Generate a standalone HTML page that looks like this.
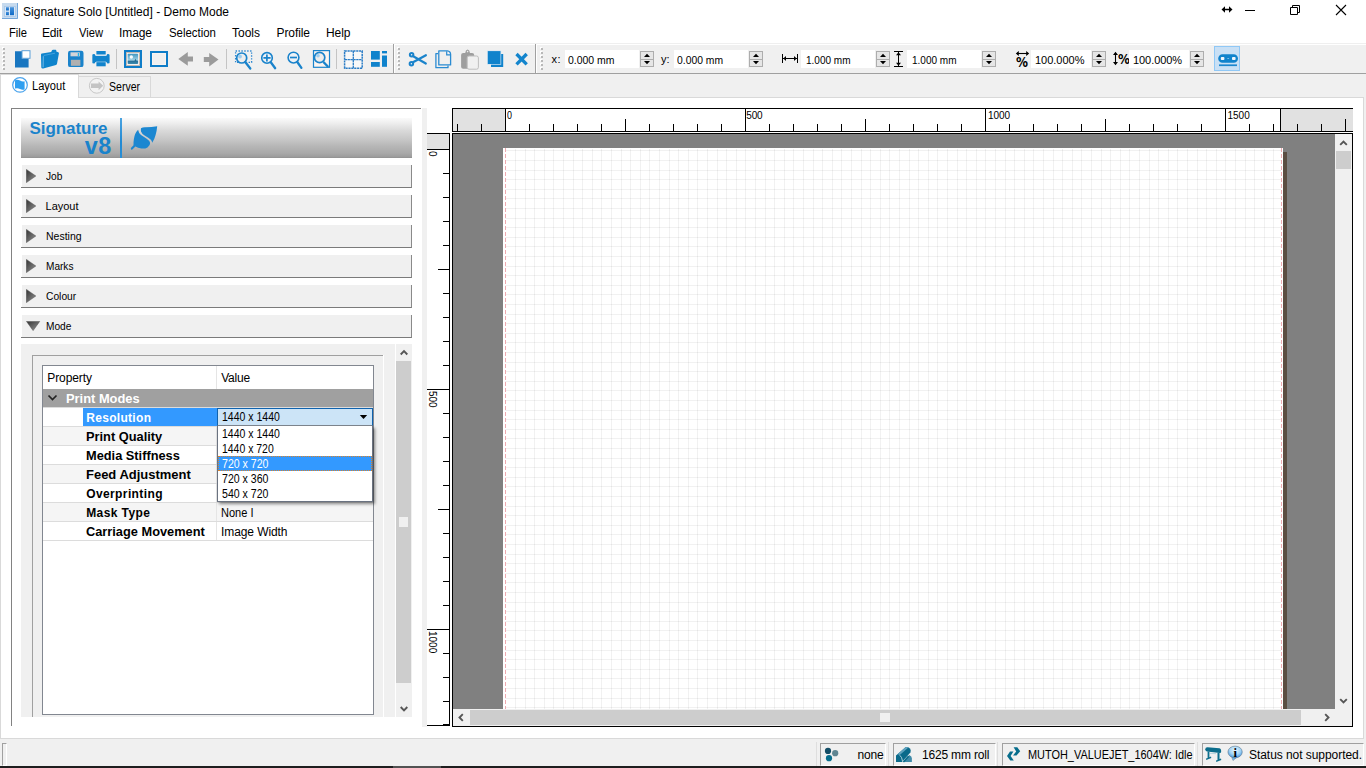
<!DOCTYPE html>
<html><head><meta charset="utf-8"><title>Signature Solo [Untitled] - Demo Mode</title>
<style>
html,body{margin:0;padding:0;width:1366px;height:768px;overflow:hidden;background:#fff;font-family:"Liberation Sans",sans-serif;}
#app{position:relative;width:1366px;height:768px;overflow:hidden}
#app>div,#app>span,#app>svg{position:absolute;display:block}
.t{white-space:pre}
</style></head><body><div id="app">
<div style="left:0px;top:0px;width:1366px;height:44px;background:#fff"></div>
<svg class="a" style="left:2px;top:3px" width="16" height="16" viewBox="0 0 16 16"><defs><linearGradient id="ag" x1="0" y1="0" x2="0" y2="1"><stop offset="0" stop-color="#4a94dc"/><stop offset="1" stop-color="#0f6ac6"/></linearGradient></defs><rect width="16" height="16" fill="#c6daee"/><path d="M15.500 0V15.500H0" fill="none" stroke="#74a6da" stroke-width="1"/><rect x="2.500" y="3.500" width="11" height="10" fill="#d9e7f5" stroke="#a9c8e8" stroke-width=".8"/><rect x="4" y="4.200" width="2.900" height="3.300" fill="url(#ag)"/><rect x="4" y="8.800" width="2.900" height="3.400" fill="url(#ag)"/><rect x="8" y="4.200" width="4" height="8" fill="url(#ag)"/></svg>
<span class="t" style="top:5.84px;font-size:12px;line-height:12px;color:#000;left:23.00px;letter-spacing:0.017px;">Signature Solo [Untitled] - Demo Mode</span>
<svg class="a" style="left:1215px;top:0" width="151" height="22" viewBox="0 0 151 22" fill="none" stroke="#000" stroke-width="1"><path d="M8 9.5H16" stroke-width="1.5"/><path d="M6.500 9.500L10 6.300V12.700zM17.500 9.500L14 6.300V12.700z" fill="#000" stroke="none"/><path d="M30 10.5h10"/><path d="M75.5 7.5h7v7h-7zM77.5 7.5v-2h7v7h-2"/><path d="M121 5l10 10M131 5l-10 10" stroke-width="1.1"/></svg>
<span class="t" style="top:26.84px;font-size:12px;line-height:12px;color:#000;left:8.50px;transform-origin:0 0;transform:scaleX(0.9326);">File</span>
<span class="t" style="top:26.84px;font-size:12px;line-height:12px;color:#000;left:42.00px;letter-spacing:-0.233px;">Edit</span>
<span class="t" style="top:26.84px;font-size:12px;line-height:12px;color:#000;left:78.50px;transform-origin:0 0;transform:scaleX(0.9302);">View</span>
<span class="t" style="top:26.84px;font-size:12px;line-height:12px;color:#000;left:119.00px;letter-spacing:-0.100px;">Image</span>
<span class="t" style="top:26.84px;font-size:12px;line-height:12px;color:#000;left:168.50px;transform-origin:0 0;transform:scaleX(0.9514);">Selection</span>
<span class="t" style="top:26.84px;font-size:12px;line-height:12px;color:#000;left:232.00px;">Tools</span>
<span class="t" style="top:26.84px;font-size:12px;line-height:12px;color:#000;left:276.50px;letter-spacing:-0.083px;">Profile</span>
<span class="t" style="top:26.84px;font-size:12px;line-height:12px;color:#000;left:326.00px;letter-spacing:-0.067px;">Help</span>
<div style="left:0px;top:43px;width:1366px;height:1px;background:#efefef"></div>
<div style="left:0px;top:44px;width:1366px;height:29px;background:#f0f0f0"></div>
<div style="left:0px;top:44px;width:1366px;height:1px;background:#fff"></div>
<div style="left:0px;top:73px;width:1366px;height:1px;background:#a0a0a0"></div>
<div style="left:116px;top:49px;width:1px;height:20px;background:#c4c4c4"></div>
<div style="left:226px;top:49px;width:1px;height:20px;background:#c4c4c4"></div>
<div style="left:336px;top:49px;width:1px;height:20px;background:#c4c4c4"></div>
<div style="left:393px;top:44px;width:1px;height:29px;background:#a0a0a0"></div>
<div style="left:394px;top:44px;width:1px;height:29px;background:#fff"></div>
<div style="left:535px;top:44px;width:1px;height:29px;background:#a0a0a0"></div>
<div style="left:536px;top:44px;width:1px;height:29px;background:#fff"></div>
<div style="left:2px;top:47px;width:2px;height:2px;background:#fff"></div>
<div style="left:3px;top:48px;width:2px;height:2px;background:#b8b8b8"></div>
<div style="left:2px;top:51px;width:2px;height:2px;background:#fff"></div>
<div style="left:3px;top:52px;width:2px;height:2px;background:#b8b8b8"></div>
<div style="left:2px;top:55px;width:2px;height:2px;background:#fff"></div>
<div style="left:3px;top:56px;width:2px;height:2px;background:#b8b8b8"></div>
<div style="left:2px;top:59px;width:2px;height:2px;background:#fff"></div>
<div style="left:3px;top:60px;width:2px;height:2px;background:#b8b8b8"></div>
<div style="left:2px;top:63px;width:2px;height:2px;background:#fff"></div>
<div style="left:3px;top:64px;width:2px;height:2px;background:#b8b8b8"></div>
<div style="left:2px;top:67px;width:2px;height:2px;background:#fff"></div>
<div style="left:3px;top:68px;width:2px;height:2px;background:#b8b8b8"></div>
<div style="left:397px;top:47px;width:2px;height:2px;background:#fff"></div>
<div style="left:398px;top:48px;width:2px;height:2px;background:#b8b8b8"></div>
<div style="left:397px;top:51px;width:2px;height:2px;background:#fff"></div>
<div style="left:398px;top:52px;width:2px;height:2px;background:#b8b8b8"></div>
<div style="left:397px;top:55px;width:2px;height:2px;background:#fff"></div>
<div style="left:398px;top:56px;width:2px;height:2px;background:#b8b8b8"></div>
<div style="left:397px;top:59px;width:2px;height:2px;background:#fff"></div>
<div style="left:398px;top:60px;width:2px;height:2px;background:#b8b8b8"></div>
<div style="left:397px;top:63px;width:2px;height:2px;background:#fff"></div>
<div style="left:398px;top:64px;width:2px;height:2px;background:#b8b8b8"></div>
<div style="left:397px;top:67px;width:2px;height:2px;background:#fff"></div>
<div style="left:398px;top:68px;width:2px;height:2px;background:#b8b8b8"></div>
<div style="left:540px;top:47px;width:2px;height:2px;background:#fff"></div>
<div style="left:541px;top:48px;width:2px;height:2px;background:#b8b8b8"></div>
<div style="left:540px;top:51px;width:2px;height:2px;background:#fff"></div>
<div style="left:541px;top:52px;width:2px;height:2px;background:#b8b8b8"></div>
<div style="left:540px;top:55px;width:2px;height:2px;background:#fff"></div>
<div style="left:541px;top:56px;width:2px;height:2px;background:#b8b8b8"></div>
<div style="left:540px;top:59px;width:2px;height:2px;background:#fff"></div>
<div style="left:541px;top:60px;width:2px;height:2px;background:#b8b8b8"></div>
<div style="left:540px;top:63px;width:2px;height:2px;background:#fff"></div>
<div style="left:541px;top:64px;width:2px;height:2px;background:#b8b8b8"></div>
<div style="left:540px;top:67px;width:2px;height:2px;background:#fff"></div>
<div style="left:541px;top:68px;width:2px;height:2px;background:#b8b8b8"></div>
<div style="left:1214px;top:46px;width:26px;height:25px;background:#c9e0f5;border:1px solid #90c8f6;box-sizing:border-box"></div>
<svg class="a" style="left:0;top:44px" width="1366" height="30" viewBox="0 44 1366 30">
<!-- new -->
<path d="M15 51.200H22V58.500H28.600V67.500H15z" fill="#1976c0"/>
<rect x="22" y="50.700" width="8" height="7.600" fill="#fff" stroke="#5a9fd8" stroke-width="1"/>
<!-- open -->
<path d="M41 54.500Q41 53.600 42 53.500L51.200 52L52 50.300Q52.300 49.800 53 49.800L55.600 49.800Q56.300 49.800 56.300 50.600V51.600L58.200 52.200Q59.200 52.500 58.900 53.600L57 63.800Q56.800 64.600 56 64.900L43.200 68.500Q41.600 68.800 41.300 67.600Z" fill="#0f84cc"/>
<path d="M43.300 56.200L43.100 67.300" stroke="#7cc0ec" stroke-width=".9" fill="none"/>
<path d="M43.600 55.500L55 53.200" stroke="#55aee6" stroke-width=".7" fill="none"/>
<!-- save -->
<rect x="68" y="50.800" width="15.500" height="16.300" rx="2.200" fill="#1a83cb"/>
<rect x="70.500" y="52.300" width="9.400" height="4" fill="#d4d4d8"/>
<rect x="77.800" y="53" width="1.300" height="3" fill="#21b4ea"/>
<rect x="70.900" y="59.800" width="9.500" height="6" fill="#b0b0b0"/>
<!-- print -->
<rect x="96.400" y="51" width="9.300" height="3.600" fill="#1083cc"/>
<rect x="96.400" y="62" width="9.300" height="4.300" fill="#1083cc"/>
<path d="M94 55.700H108Q109.300 55.700 109.300 53.800Q109.600 58.800 109.300 63.700Q109.200 61.900 108 61.900H94Q92.900 61.900 92.700 63.700Q92.400 58.800 92.700 53.800Q92.900 55.700 94 55.700Z" fill="#1083cc"/>
<rect x="92.600" y="54" width="2.600" height="9.600" rx="1.300" fill="#1083cc"/>
<rect x="106.700" y="54" width="2.600" height="9.600" rx="1.300" fill="#1083cc"/>
<rect x="96" y="54.800" width="10.100" height=".800" fill="#dbeaf6"/><rect x="96" y="61.700" width="10.100" height=".500" fill="#dbeaf6"/>
<!-- image frame -->
<defs><linearGradient id="sky" x1="0" y1="0" x2="0" y2="1"><stop offset="0" stop-color="#3f96c0"/><stop offset=".65" stop-color="#a8d6e8"/><stop offset=".66" stop-color="#256b91"/><stop offset="1" stop-color="#3f8db2"/></linearGradient></defs>
<rect x="125" y="51" width="16" height="16" fill="#e6dfd8" stroke="#0f7dc8" stroke-width="2"/>
<rect x="126.500" y="52.500" width="13" height="13" fill="#f4f4f4" stroke="#c0b4aa" stroke-width=".9"/>
<rect x="127.700" y="53.700" width="10.400" height="10.400" rx=".8" fill="url(#sky)"/>
<circle cx="131.300" cy="57" r="1.700" fill="#fff" opacity=".95"/>
<path d="M134.500 61L135.500 58.600L136.500 61z" fill="#256b91"/>
<!-- empty frame -->
<rect x="151" y="52" width="16" height="14" fill="#f0f0f0" stroke="#0f7dc8" stroke-width="2"/>
<rect x="152.400" y="53.400" width="13.200" height="11.200" fill="none" stroke="#fbf6f2" stroke-width=".8"/>
<!-- arrows -->
<path d="M178.300 58.900L187.800 52.100V56.400H193V61.400H187.800V65.800z" fill="#9b9b9b"/>
<path d="M218.500 59.500L209.200 52.900V57H203.800V62H209.200V66.400z" fill="#9b9b9b"/>
<!-- zoom rect -->
<rect x="235.600" y="51" width="16" height="11.400" fill="none" stroke="#2d86cf" stroke-width="1.300" stroke-dasharray="1.400 1.500"/>
<circle cx="241.700" cy="58" r="5" fill="#eeeeee" stroke="#1a83cb" stroke-width="1.700"/>
<circle cx="240" cy="56.500" r="1.900" fill="#9ccdf0"/>
<path d="M245.400 62.200L250.300 68.500" stroke="#1a83cb" stroke-width="2.300" stroke-linecap="round"/>
<!-- zoom in -->
<circle cx="267" cy="57.900" r="5.300" fill="#eef2f6" stroke="#1a83cb" stroke-width="1.600"/>
<path d="M263.400 57.800H270.600M266.900 54.400V61.400" stroke="#1a83cb" stroke-width="1.700"/>
<path d="M270.800 62.300L275.200 68.200" stroke="#1a83cb" stroke-width="2.300" stroke-linecap="round"/>
<!-- zoom out -->
<circle cx="293.500" cy="57.600" r="5.400" fill="#eef2f6" stroke="#1a83cb" stroke-width="1.600"/>
<path d="M290 57.500H297" stroke="#1a83cb" stroke-width="1.700"/>
<path d="M297.300 62L301.400 67.800" stroke="#1a83cb" stroke-width="2.300" stroke-linecap="round"/>
<!-- zoom fit -->
<rect x="313.500" y="50.600" width="16" height="16.700" fill="#fbf4f0" stroke="#1a83cb" stroke-width="1.200"/>
<circle cx="319.600" cy="57.500" r="5.200" fill="#ececec" stroke="#1a83cb" stroke-width="1.700"/>
<circle cx="318" cy="55.700" r="1.800" fill="#9ccdf0"/>
<path d="M323.400 62L328.300 67" stroke="#1a83cb" stroke-width="2.400" stroke-linecap="butt"/>
<!-- grid -->
<rect x="344.600" y="51" width="17.600" height="17.200" fill="#f8f8f8" stroke="#2a7cc6" stroke-width="1.500" stroke-dasharray="2.200 .700"/>
<path d="M353.300 51V68.200M344.600 59.600H362.200" stroke="#2a7cc6" stroke-width="1.300" stroke-dasharray="2.400 .500"/>
<!-- layout -->
<rect x="371" y="51" width="8.800" height="8.600" fill="#1083cc"/>
<rect x="371" y="62" width="8.800" height="4.800" fill="#1083cc"/>
<rect x="382" y="51" width="5" height="2.400" fill="#1083cc"/>
<rect x="382" y="55.500" width="5" height="11.300" fill="#1083cc"/>
<!-- scissors -->
<circle cx="411.600" cy="54.800" r="1.750" fill="none" stroke="#1a83cb" stroke-width="2"/>
<circle cx="411.400" cy="63.800" r="1.750" fill="none" stroke="#1a83cb" stroke-width="2"/>
<path d="M413.200 56.300L425.800 63.500M413 62.300L425.900 55.200" stroke="#1a83cb" stroke-width="2.200" stroke-linecap="round"/>
<!-- copy -->
<path d="M438 53.700H435.900V67.700H448V65.600" fill="#efefef" stroke="#2a8bd2" stroke-width="1.300" stroke-linejoin="round"/>
<path d="M438.800 50.900H447.300Q450.600 51.300 450.600 54.500V64.900H438.800z" fill="#f1f0ef" stroke="#2a8bd2" stroke-width="1.300" stroke-linejoin="round"/>
<path d="M446.700 51.200V54.800H450.300" fill="none" stroke="#2a8bd2" stroke-width="1.200"/>
<!-- paste -->
<path d="M461.100 55Q461.100 52.900 463.200 52.900H465.200Q465.600 49.800 467.600 49.600Q469.600 49.800 470 52.900H472Q474.200 52.900 474.200 55V66.700Q474.200 68.700 472 68.700H463.200Q461.100 68.700 461.100 66.700Z" fill="#9e9e9e"/>
<circle cx="467.600" cy="51.600" r=".8" fill="#eee"/>
<rect x="467.200" y="56" width="11.200" height="13.200" rx="1.800" fill="#f0f0f0" stroke="#bdbdbd" stroke-width="1"/>
<!-- stack -->
<path d="M491 54H503.200V67H491z" fill="#1083cc"/>
<rect x="487.200" y="50.500" width="14" height="14.200" fill="#cfe4f4"/>
<rect x="487.800" y="51.100" width="12.700" height="12.900" fill="#1083cc"/>
<!-- delete -->
<path d="M516.500 54L526.700 64.400M526.700 54L516.500 64.400" stroke="#1385cd" stroke-width="3.300"/>
<!-- width -->
<path d="M782.500 54V63M797.500 54V63M783 58.500H797" stroke="#000" stroke-width="1" fill="none"/>
<path d="M783.300 58.500L786 56V61zM796.700 58.500L794 56V61z" fill="#000"/>
<!-- height -->
<path d="M894 51.500H903M894 66.500H903M898.500 52V66" stroke="#000" stroke-width="1" fill="none"/>
<path d="M898.500 52.200L896 55.200H901zM898.500 65.800L896 62.800H901z" fill="#000"/>
<!-- scale x -->
<path d="M1017 53.500H1028" stroke="#000" stroke-width="1.100"/>
<path d="M1015.800 53.500L1018.800 51V56zM1029.200 53.500L1026.200 51V56z" fill="#000"/>
<!-- scale y -->
<path d="M1115.500 53V64" stroke="#000" stroke-width="1.100"/>
<path d="M1115.500 51.800L1113 55H1118zM1115.500 65.200L1113 62H1118z" fill="#000"/>
<!-- link -->
<rect x="1219.200" y="55.200" width="17.800" height="6.600" rx="3.300" fill="#1083cc" stroke="#1083cc" stroke-width="2"/>
<rect x="1220.800" y="57" width="3.600" height="3" rx=".9" fill="#eef5fb"/>
<rect x="1232" y="57" width="3.600" height="3" rx=".9" fill="#eef5fb"/>
<rect x="1227.300" y="58.200" width="1.800" height=".8" fill="#8fc4ea"/>
<rect x="1219" y="64.400" width="18" height="1.700" fill="#1a86cf"/>
</svg>
<span class="t" style="left:1016.2px;top:55px;font-family:'DejaVu Sans',sans-serif;font-size:13.6px;line-height:14px;font-weight:bold;transform-origin:0 0;transform:scaleX(.88)">%</span>
<span class="t" style="left:1117.6px;top:52px;font-family:'DejaVu Sans',sans-serif;font-size:13.6px;line-height:14px;font-weight:bold;transform-origin:0 0;transform:scaleX(.88)">%</span>
<div style="left:565px;top:50px;width:74px;height:18px;background:#fff"></div>
<div style="left:640px;top:51px;width:14px;height:16px;background:#e6e6e6;border:1px solid #adadad;box-sizing:border-box"></div>
<div style="left:640px;top:58.5px;width:14px;height:1px;background:#adadad"></div>
<svg class="a" style="left:640px;top:51px" width="14" height="16" viewBox="0 0 14 16"><path d="M4 6l3-3.2L10 6zM4 10l3 3.2L10 10z" fill="#000"/></svg>
<div style="left:674px;top:50px;width:74px;height:18px;background:#fff"></div>
<div style="left:749px;top:51px;width:14px;height:16px;background:#e6e6e6;border:1px solid #adadad;box-sizing:border-box"></div>
<div style="left:749px;top:58.5px;width:14px;height:1px;background:#adadad"></div>
<svg class="a" style="left:749px;top:51px" width="14" height="16" viewBox="0 0 14 16"><path d="M4 6l3-3.2L10 6zM4 10l3 3.2L10 10z" fill="#000"/></svg>
<div style="left:801px;top:50px;width:74px;height:18px;background:#fff"></div>
<div style="left:876px;top:51px;width:14px;height:16px;background:#e6e6e6;border:1px solid #adadad;box-sizing:border-box"></div>
<div style="left:876px;top:58.5px;width:14px;height:1px;background:#adadad"></div>
<svg class="a" style="left:876px;top:51px" width="14" height="16" viewBox="0 0 14 16"><path d="M4 6l3-3.2L10 6zM4 10l3 3.2L10 10z" fill="#000"/></svg>
<div style="left:907px;top:50px;width:74px;height:18px;background:#fff"></div>
<div style="left:982px;top:51px;width:14px;height:16px;background:#e6e6e6;border:1px solid #adadad;box-sizing:border-box"></div>
<div style="left:982px;top:58.5px;width:14px;height:1px;background:#adadad"></div>
<svg class="a" style="left:982px;top:51px" width="14" height="16" viewBox="0 0 14 16"><path d="M4 6l3-3.2L10 6zM4 10l3 3.2L10 10z" fill="#000"/></svg>
<div style="left:1031px;top:50px;width:60px;height:18px;background:#fff"></div>
<div style="left:1092px;top:51px;width:14px;height:16px;background:#e6e6e6;border:1px solid #adadad;box-sizing:border-box"></div>
<div style="left:1092px;top:58.5px;width:14px;height:1px;background:#adadad"></div>
<svg class="a" style="left:1092px;top:51px" width="14" height="16" viewBox="0 0 14 16"><path d="M4 6l3-3.2L10 6zM4 10l3 3.2L10 10z" fill="#000"/></svg>
<div style="left:1129px;top:50px;width:60px;height:18px;background:#fff"></div>
<div style="left:1190px;top:51px;width:14px;height:16px;background:#e6e6e6;border:1px solid #adadad;box-sizing:border-box"></div>
<div style="left:1190px;top:58.5px;width:14px;height:1px;background:#adadad"></div>
<svg class="a" style="left:1190px;top:51px" width="14" height="16" viewBox="0 0 14 16"><path d="M4 6l3-3.2L10 6zM4 10l3 3.2L10 10z" fill="#000"/></svg>
<span class="t" style="top:53.69px;font-size:11px;line-height:11px;color:#000;left:551.50px;letter-spacing:0.500px;">x:</span>
<span class="t" style="top:53.69px;font-size:11px;line-height:11px;color:#000;left:661.00px;letter-spacing:0.100px;">y:</span>
<span class="t" style="top:54.69px;font-size:11px;line-height:11px;color:#000;left:567.50px;transform-origin:0 0;transform:scaleX(0.9509);">0.000 mm</span>
<span class="t" style="top:54.69px;font-size:11px;line-height:11px;color:#000;left:677.00px;transform-origin:0 0;transform:scaleX(0.9407);">0.000 mm</span>
<span class="t" style="top:54.69px;font-size:11px;line-height:11px;color:#000;left:805.50px;transform-origin:0 0;transform:scaleX(0.9100);">1.000 mm</span>
<span class="t" style="top:54.69px;font-size:11px;line-height:11px;color:#000;left:911.50px;transform-origin:0 0;transform:scaleX(0.9100);">1.000 mm</span>
<span class="t" style="top:54.69px;font-size:11px;line-height:11px;color:#000;left:1035.00px;letter-spacing:-0.014px;">100.000%</span>
<span class="t" style="top:54.69px;font-size:11px;line-height:11px;color:#000;left:1133.00px;letter-spacing:-0.071px;">100.000%</span>
<div style="left:0px;top:74px;width:1366px;height:23px;background:#f0f0f0"></div>
<div style="left:0px;top:97px;width:1364px;height:642px;background:#fff;border:1px solid #d9d9d9;box-sizing:border-box"></div>
<div style="left:1364px;top:97px;width:2px;height:642px;background:#f0f0f0"></div>
<div style="left:0px;top:74px;width:79px;height:24px;background:#fff;border:1px solid #d9d9d9;border-bottom:none;box-sizing:border-box"></div>
<div style="left:78px;top:76px;width:73px;height:21px;background:#f0f0f0;border:1px solid #d9d9d9;border-bottom:none;box-sizing:border-box"></div>
<span class="t" style="top:79.84px;font-size:12px;line-height:12px;color:#000;left:31.50px;transform-origin:0 0;transform:scaleX(0.9222);">Layout</span>
<span class="t" style="top:80.84px;font-size:12px;line-height:12px;color:#000;left:108.70px;transform-origin:0 0;transform:scaleX(0.8782);">Server</span>
<svg class="a" style="left:0;top:74px" width="160" height="24" viewBox="0 74 160 24">
<circle cx="20" cy="84.900" r="7.300" fill="#fff" stroke="#4aa3ec" stroke-width="1.200"/>
<path d="M15 80.300Q17.500 79 20 80.500Q22.500 82 24.600 81.200V89.400Q22.500 90.400 20 89Q17.500 87.600 15 88.600Z" fill="#2f9ff0"/>
<circle cx="96.800" cy="85.800" r="7.400" fill="#f3f3f3" stroke="#c8c8c8" stroke-width="1"/>
<path d="M91 83.500H98.600V81.400L103.200 85.800L98.600 90.200V88H91z" fill="#c4c4c4"/>
</svg>
<div style="left:11px;top:108px;width:410px;height:1px;background:#828282"></div>
<div style="left:11px;top:108px;width:1px;height:618px;background:#828282"></div>
<div style="left:422px;top:108px;width:5px;height:619px;background:#f0f0f0"></div>
<div style="left:21px;top:118px;width:391px;height:40px;background:linear-gradient(180deg,#fafafa 0%,#f1f1f1 10%,#e6e6e6 20%,#d9d9d9 32%,#cdcdcd 46%,#c3c3c3 58%,#b5b5b5 72%,#a9a9a9 88%,#9e9e9e 96%,#909090 100%)"></div>
<span class="t" style="top:119.61px;font-size:17px;line-height:17px;color:#1a83cb;font-weight:bold;left:29.60px;letter-spacing:-0.075px;">Signature</span>
<span class="t" style="top:135.49px;font-size:23.4px;line-height:23.4px;color:#1a83cb;font-weight:bold;left:84.80px;letter-spacing:0.400px;">v8</span>
<div style="left:120px;top:118px;width:2px;height:40px;background:linear-gradient(180deg,#4ba3e0,#2189d3 60%,#2a8fd6)"></div>
<svg class="a" style="left:128px;top:122px" width="32" height="32" viewBox="128 122 32 32">
<path d="M141 128.300Q142.500 127.200 145 127.200Q151 127.300 157.200 126.200Q156.800 131 155.600 135Q154.400 139.600 152.200 142.700Q152 140.600 150.600 139.400Q148 137.500 145 135.800Q141.800 134 141 131.600Q140.700 129.800 141 128.300Z" fill="#1b87d1"/>
<path d="M138.100 129.800Q136.200 131.600 135.200 134Q134.300 136.200 133.900 139Q133.300 142.500 133.500 145.300L130.900 148Q130.400 149.100 131.800 149.900L135.400 146.500Q137.800 147.900 141.400 148.500Q144.800 149 147.500 147.400Q150.300 145.600 150.100 143Q149.700 140.600 146.700 138.700Q143.600 136.900 141 135.100Q138.600 133.200 138.100 129.800Z" fill="#1b87d1"/>
</svg>
<div style="left:21px;top:165px;width:391px;height:23px;background:#f0f0f0;border-right:1px solid #8a8a8a;border-bottom:1px solid #7a7a7a;box-sizing:border-box"></div>
<div style="left:21px;top:165px;width:1px;height:22px;background:#fff"></div>
<span class="t" style="top:170.69px;font-size:11px;line-height:11px;color:#000;left:45.60px;transform-origin:0 0;transform:scaleX(0.9266);">Job</span>
<svg class="a" style="left:26px;top:169px" width="11" height="14" viewBox="0 0 11 14"><defs><linearGradient id="tg0" x1="0" y1="0" x2="1" y2="1"><stop offset="0" stop-color="#333"/><stop offset="1" stop-color="#999"/></linearGradient></defs><path d="M0.400 0.400L9.800 7L0.400 13.600z" fill="url(#tg0)" stroke="#4a4a4a" stroke-width=".5"/></svg>
<div style="left:21px;top:195px;width:391px;height:23px;background:#f0f0f0;border-right:1px solid #8a8a8a;border-bottom:1px solid #7a7a7a;box-sizing:border-box"></div>
<div style="left:21px;top:195px;width:1px;height:22px;background:#fff"></div>
<span class="t" style="top:200.69px;font-size:11px;line-height:11px;color:#000;left:45.60px;letter-spacing:-0.020px;">Layout</span>
<svg class="a" style="left:26px;top:199px" width="11" height="14" viewBox="0 0 11 14"><defs><linearGradient id="tg1" x1="0" y1="0" x2="1" y2="1"><stop offset="0" stop-color="#333"/><stop offset="1" stop-color="#999"/></linearGradient></defs><path d="M0.400 0.400L9.800 7L0.400 13.600z" fill="url(#tg1)" stroke="#4a4a4a" stroke-width=".5"/></svg>
<div style="left:21px;top:225px;width:391px;height:23px;background:#f0f0f0;border-right:1px solid #8a8a8a;border-bottom:1px solid #7a7a7a;box-sizing:border-box"></div>
<div style="left:21px;top:225px;width:1px;height:22px;background:#fff"></div>
<span class="t" style="top:230.69px;font-size:11px;line-height:11px;color:#000;left:45.60px;transform-origin:0 0;transform:scaleX(0.9544);">Nesting</span>
<svg class="a" style="left:26px;top:229px" width="11" height="14" viewBox="0 0 11 14"><defs><linearGradient id="tg2" x1="0" y1="0" x2="1" y2="1"><stop offset="0" stop-color="#333"/><stop offset="1" stop-color="#999"/></linearGradient></defs><path d="M0.400 0.400L9.800 7L0.400 13.600z" fill="url(#tg2)" stroke="#4a4a4a" stroke-width=".5"/></svg>
<div style="left:21px;top:255px;width:391px;height:23px;background:#f0f0f0;border-right:1px solid #8a8a8a;border-bottom:1px solid #7a7a7a;box-sizing:border-box"></div>
<div style="left:21px;top:255px;width:1px;height:22px;background:#fff"></div>
<span class="t" style="top:260.69px;font-size:11px;line-height:11px;color:#000;left:45.60px;transform-origin:0 0;transform:scaleX(0.9164);">Marks</span>
<svg class="a" style="left:26px;top:259px" width="11" height="14" viewBox="0 0 11 14"><defs><linearGradient id="tg3" x1="0" y1="0" x2="1" y2="1"><stop offset="0" stop-color="#333"/><stop offset="1" stop-color="#999"/></linearGradient></defs><path d="M0.400 0.400L9.800 7L0.400 13.600z" fill="url(#tg3)" stroke="#4a4a4a" stroke-width=".5"/></svg>
<div style="left:21px;top:285px;width:391px;height:23px;background:#f0f0f0;border-right:1px solid #8a8a8a;border-bottom:1px solid #7a7a7a;box-sizing:border-box"></div>
<div style="left:21px;top:285px;width:1px;height:22px;background:#fff"></div>
<span class="t" style="top:290.69px;font-size:11px;line-height:11px;color:#000;left:45.60px;transform-origin:0 0;transform:scaleX(0.9321);">Colour</span>
<svg class="a" style="left:26px;top:289px" width="11" height="14" viewBox="0 0 11 14"><defs><linearGradient id="tg4" x1="0" y1="0" x2="1" y2="1"><stop offset="0" stop-color="#333"/><stop offset="1" stop-color="#999"/></linearGradient></defs><path d="M0.400 0.400L9.800 7L0.400 13.600z" fill="url(#tg4)" stroke="#4a4a4a" stroke-width=".5"/></svg>
<div style="left:21px;top:315px;width:391px;height:23px;background:#f0f0f0;border-right:1px solid #8a8a8a;border-bottom:1px solid #7a7a7a;box-sizing:border-box"></div>
<div style="left:21px;top:315px;width:1px;height:22px;background:#fff"></div>
<span class="t" style="top:320.69px;font-size:11px;line-height:11px;color:#000;left:45.60px;transform-origin:0 0;transform:scaleX(0.9236);">Mode</span>
<svg class="a" style="left:26px;top:321px" width="15" height="11" viewBox="0 0 15 11"><defs><linearGradient id="tg5" x1="0" y1="0" x2="1" y2="1"><stop offset="0" stop-color="#333"/><stop offset="1" stop-color="#999"/></linearGradient></defs><path d="M0.500 0.400L13.700 0.400L7.100 9.600z" fill="url(#tg5)" stroke="#4a4a4a" stroke-width=".5"/></svg>
<div style="left:21px;top:344px;width:374px;height:373px;background:#f0f0f0"></div>
<div style="left:32px;top:355px;width:351px;height:1px;background:#a0a0a0"></div>
<div style="left:32px;top:355px;width:1px;height:362px;background:#a0a0a0"></div>
<div style="left:383px;top:355px;width:1px;height:362px;background:#fff"></div>
<div style="left:396px;top:344px;width:16px;height:373px;background:#f0f0f0"></div>
<div style="left:396px;top:361px;width:15px;height:322px;background:#cdcdcd"></div>
<div style="left:399px;top:517px;width:9px;height:10px;background:#f0f0f0"></div>
<svg class="a" style="left:396px;top:344px" width="16" height="373" viewBox="0 0 16 373" fill="none" stroke="#565656" stroke-width="1.9"><path d="M4.700 10.500L8 7.200l3.300 3.300"/><path d="M4.700 363L8 366.300l3.300-3.300"/></svg>
<div style="left:42px;top:365px;width:332px;height:350px;background:#fff;border:1px solid #828790;box-sizing:border-box"></div>
<div style="left:216px;top:366px;width:1px;height:23px;background:#e5e5e5"></div>
<span class="t" style="top:371.84px;font-size:12px;line-height:12px;color:#000;left:47.30px;letter-spacing:-0.100px;">Property</span>
<span class="t" style="top:371.84px;font-size:12px;line-height:12px;color:#000;left:221.20px;letter-spacing:-0.200px;">Value</span>
<div style="left:43px;top:389px;width:330px;height:18px;background:#a0a0a0"></div>
<div style="left:43px;top:407px;width:330px;height:1px;background:#dcdcdc"></div>
<svg class="a" style="left:47px;top:394px" width="11" height="8" viewBox="0 0 11 8"><path d="M1.500 1.500L5.500 5.500L9.500 1.500" fill="none" stroke="#222" stroke-width="1.7"/></svg>
<span class="t" style="top:392.84px;font-size:12px;line-height:12px;color:#fff;font-weight:bold;left:66.30px;transform-origin:0 0;transform:scaleX(1.0728);">Print Modes</span>
<div style="left:43px;top:426px;width:330px;height:1px;background:#dcdcdc"></div>
<div style="left:216px;top:408px;width:1px;height:18px;background:#e5e5e5"></div>
<div style="left:83px;top:408px;width:134px;height:18px;background:#3399ff"></div>
<span class="t" style="top:411.84px;font-size:12px;line-height:12px;color:#fff;font-weight:bold;left:86.20px;letter-spacing:0.311px;">Resolution</span>
<div style="left:43px;top:427px;width:330px;height:18px;background:#f5f5f5"></div>
<div style="left:43px;top:445px;width:330px;height:1px;background:#dcdcdc"></div>
<div style="left:216px;top:427px;width:1px;height:18px;background:#e5e5e5"></div>
<span class="t" style="top:430.84px;font-size:12px;line-height:12px;color:#000;font-weight:bold;left:86.20px;transform-origin:0 0;transform:scaleX(1.0686);">Print Quality</span>
<div style="left:43px;top:464px;width:330px;height:1px;background:#dcdcdc"></div>
<div style="left:216px;top:446px;width:1px;height:18px;background:#e5e5e5"></div>
<span class="t" style="top:449.84px;font-size:12px;line-height:12px;color:#000;font-weight:bold;left:86.20px;transform-origin:0 0;transform:scaleX(1.0659);">Media Stiffness</span>
<div style="left:43px;top:465px;width:330px;height:18px;background:#f5f5f5"></div>
<div style="left:43px;top:483px;width:330px;height:1px;background:#dcdcdc"></div>
<div style="left:216px;top:465px;width:1px;height:18px;background:#e5e5e5"></div>
<span class="t" style="top:468.84px;font-size:12px;line-height:12px;color:#000;font-weight:bold;left:86.20px;transform-origin:0 0;transform:scaleX(1.0815);">Feed Adjustment</span>
<div style="left:43px;top:502px;width:330px;height:1px;background:#dcdcdc"></div>
<div style="left:216px;top:484px;width:1px;height:18px;background:#e5e5e5"></div>
<span class="t" style="top:487.84px;font-size:12px;line-height:12px;color:#000;font-weight:bold;left:86.20px;letter-spacing:0.391px;">Overprinting</span>
<div style="left:43px;top:503px;width:330px;height:18px;background:#f5f5f5"></div>
<div style="left:43px;top:521px;width:330px;height:1px;background:#dcdcdc"></div>
<div style="left:216px;top:503px;width:1px;height:18px;background:#e5e5e5"></div>
<span class="t" style="top:506.84px;font-size:12px;line-height:12px;color:#000;font-weight:bold;left:86.20px;letter-spacing:0.412px;">Mask Type</span>
<div style="left:43px;top:540px;width:330px;height:1px;background:#dcdcdc"></div>
<div style="left:216px;top:522px;width:1px;height:18px;background:#e5e5e5"></div>
<span class="t" style="top:525.84px;font-size:12px;line-height:12px;color:#000;font-weight:bold;left:86.20px;transform-origin:0 0;transform:scaleX(1.0664);">Carriage Movement</span>
<span class="t" style="top:506.84px;font-size:12px;line-height:12px;color:#000;left:221.00px;transform-origin:0 0;transform:scaleX(0.9181);">None I</span>
<span class="t" style="top:525.84px;font-size:12px;line-height:12px;color:#000;left:221.00px;letter-spacing:-0.090px;">Image Width</span>
<div style="left:217px;top:408px;width:156px;height:18px;background:#cce4f7;border:1px solid #1062ad;border-bottom-color:#7f8790;box-sizing:border-box"></div>
<span class="t" style="top:410.84px;font-size:12px;line-height:12px;color:#000;left:221.80px;transform-origin:0 0;transform:scaleX(0.8759);">1440 x 1440</span>
<svg class="a" style="left:359px;top:414px" width="9" height="6" viewBox="0 0 9 6"><path d="M0.800 1h7.400L4.500 5z" fill="#000"/></svg>
<div style="left:217px;top:426px;width:156px;height:76px;background:#fff;border:1px solid #6a7280;border-top:none;box-sizing:border-box;box-shadow:2px 2px 3px rgba(0,0,0,.45)"></div>
<div style="left:218px;top:456px;width:154px;height:15px;background:#3399ff;outline:1px dotted #d9822b;outline-offset:-1px"></div>
<span class="t" style="top:427.84px;font-size:12px;line-height:12px;color:#000;left:221.80px;transform-origin:0 0;transform:scaleX(0.8759);">1440 x 1440</span>
<span class="t" style="top:442.84px;font-size:12px;line-height:12px;color:#000;left:221.80px;transform-origin:0 0;transform:scaleX(0.8704);">1440 x 720</span>
<span class="t" style="top:457.84px;font-size:12px;line-height:12px;color:#fff;left:221.60px;transform-origin:0 0;transform:scaleX(0.8805);">720 x 720</span>
<span class="t" style="top:472.84px;font-size:12px;line-height:12px;color:#000;left:221.60px;transform-origin:0 0;transform:scaleX(0.8805);">720 x 360</span>
<span class="t" style="top:487.84px;font-size:12px;line-height:12px;color:#000;left:221.60px;transform-origin:0 0;transform:scaleX(0.8805);">540 x 720</span>
<div style="left:452px;top:108px;width:901px;height:24px;background:#fff;border:1px solid #000;border-right:none;box-sizing:border-box"></div>
<div style="left:453px;top:109px;width:52px;height:22px;background:#e1e1e1"></div>
<div style="left:1281px;top:109px;width:72px;height:22px;background:#e1e1e1"></div>
<div style="left:457px;top:124px;width:1px;height:7px;background:#000"></div>
<div style="left:481px;top:124px;width:1px;height:7px;background:#000"></div>
<div style="left:505px;top:109px;width:1px;height:22px;background:#000"></div>
<div style="left:529px;top:124px;width:1px;height:7px;background:#000"></div>
<div style="left:553px;top:124px;width:1px;height:7px;background:#000"></div>
<div style="left:577px;top:124px;width:1px;height:7px;background:#000"></div>
<div style="left:601px;top:124px;width:1px;height:7px;background:#000"></div>
<div style="left:625px;top:119px;width:1px;height:12px;background:#000"></div>
<div style="left:649px;top:124px;width:1px;height:7px;background:#000"></div>
<div style="left:673px;top:124px;width:1px;height:7px;background:#000"></div>
<div style="left:697px;top:124px;width:1px;height:7px;background:#000"></div>
<div style="left:721px;top:124px;width:1px;height:7px;background:#000"></div>
<div style="left:745px;top:109px;width:1px;height:22px;background:#000"></div>
<div style="left:769px;top:124px;width:1px;height:7px;background:#000"></div>
<div style="left:793px;top:124px;width:1px;height:7px;background:#000"></div>
<div style="left:817px;top:124px;width:1px;height:7px;background:#000"></div>
<div style="left:841px;top:124px;width:1px;height:7px;background:#000"></div>
<div style="left:865px;top:119px;width:1px;height:12px;background:#000"></div>
<div style="left:889px;top:124px;width:1px;height:7px;background:#000"></div>
<div style="left:913px;top:124px;width:1px;height:7px;background:#000"></div>
<div style="left:937px;top:124px;width:1px;height:7px;background:#000"></div>
<div style="left:961px;top:124px;width:1px;height:7px;background:#000"></div>
<div style="left:985px;top:109px;width:1px;height:22px;background:#000"></div>
<div style="left:1009px;top:124px;width:1px;height:7px;background:#000"></div>
<div style="left:1033px;top:124px;width:1px;height:7px;background:#000"></div>
<div style="left:1057px;top:124px;width:1px;height:7px;background:#000"></div>
<div style="left:1081px;top:124px;width:1px;height:7px;background:#000"></div>
<div style="left:1105px;top:119px;width:1px;height:12px;background:#000"></div>
<div style="left:1129px;top:124px;width:1px;height:7px;background:#000"></div>
<div style="left:1153px;top:124px;width:1px;height:7px;background:#000"></div>
<div style="left:1177px;top:124px;width:1px;height:7px;background:#000"></div>
<div style="left:1201px;top:124px;width:1px;height:7px;background:#000"></div>
<div style="left:1225px;top:109px;width:1px;height:22px;background:#000"></div>
<div style="left:1249px;top:124px;width:1px;height:7px;background:#000"></div>
<div style="left:1273px;top:124px;width:1px;height:7px;background:#000"></div>
<div style="left:1297px;top:124px;width:1px;height:7px;background:#000"></div>
<div style="left:1321px;top:124px;width:1px;height:7px;background:#000"></div>
<div style="left:1345px;top:119px;width:1px;height:12px;background:#000"></div>
<div style="left:1280px;top:109px;width:1px;height:22px;background:#000"></div>
<span class="t" style="top:110.53px;font-size:10px;line-height:10px;color:#000;left:507.00px;transform-origin:0 0;transform:scaleX(0.8929);">0</span>
<span class="t" style="top:110.53px;font-size:10px;line-height:10px;color:#000;left:746.30px;letter-spacing:-0.150px;">500</span>
<span class="t" style="top:110.53px;font-size:10px;line-height:10px;color:#000;left:988.00px;letter-spacing:-0.067px;">1000</span>
<span class="t" style="top:110.53px;font-size:10px;line-height:10px;color:#000;left:1227.50px;">1500</span>
<div style="left:427px;top:133px;width:23px;height:593px;background:#fff;border:1px solid #000;border-left:none;box-sizing:border-box"></div>
<div style="left:427px;top:134px;width:22px;height:15px;background:#e1e1e1"></div>
<div style="left:427px;top:149px;width:22px;height:1px;background:#000"></div>
<div style="left:443px;top:173px;width:6px;height:1px;background:#000"></div>
<div style="left:443px;top:197px;width:6px;height:1px;background:#000"></div>
<div style="left:443px;top:221px;width:6px;height:1px;background:#000"></div>
<div style="left:443px;top:245px;width:6px;height:1px;background:#000"></div>
<div style="left:438px;top:269px;width:11px;height:1px;background:#000"></div>
<div style="left:443px;top:293px;width:6px;height:1px;background:#000"></div>
<div style="left:443px;top:317px;width:6px;height:1px;background:#000"></div>
<div style="left:443px;top:341px;width:6px;height:1px;background:#000"></div>
<div style="left:443px;top:365px;width:6px;height:1px;background:#000"></div>
<div style="left:427px;top:389px;width:22px;height:1px;background:#000"></div>
<div style="left:443px;top:413px;width:6px;height:1px;background:#000"></div>
<div style="left:443px;top:437px;width:6px;height:1px;background:#000"></div>
<div style="left:443px;top:461px;width:6px;height:1px;background:#000"></div>
<div style="left:443px;top:485px;width:6px;height:1px;background:#000"></div>
<div style="left:438px;top:509px;width:11px;height:1px;background:#000"></div>
<div style="left:443px;top:533px;width:6px;height:1px;background:#000"></div>
<div style="left:443px;top:557px;width:6px;height:1px;background:#000"></div>
<div style="left:443px;top:581px;width:6px;height:1px;background:#000"></div>
<div style="left:443px;top:605px;width:6px;height:1px;background:#000"></div>
<div style="left:427px;top:629px;width:22px;height:1px;background:#000"></div>
<div style="left:443px;top:653px;width:6px;height:1px;background:#000"></div>
<div style="left:443px;top:677px;width:6px;height:1px;background:#000"></div>
<div style="left:443px;top:701px;width:6px;height:1px;background:#000"></div>
<div style="left:443px;top:725px;width:6px;height:1px;background:#000"></div>
<div style="left:443px;top:724px;width:6px;height:1px;background:#000"></div>
<span class="t" style="left:427px;top:151px;font-size:10px;line-height:10px;transform-origin:0 0;transform:rotate(90deg) translate(0,-100%);">0</span>
<span class="t" style="left:427px;top:391px;font-size:10px;line-height:10px;transform-origin:0 0;transform:rotate(90deg) translate(0,-100%);">500</span>
<span class="t" style="left:427px;top:631px;font-size:10px;line-height:10px;transform-origin:0 0;transform:rotate(90deg) translate(0,-100%);">1000</span>
<div style="left:452px;top:133px;width:901px;height:594px;background:#808080;border:1px solid #000;box-sizing:border-box"></div>
<div style="left:1283px;top:152px;width:4px;height:557px;background:#5b4e42"></div>
<div style="left:503px;top:148px;width:780px;height:561px;background:#fff"></div>
<svg class="a" style="left:503px;top:148px" width="780" height="561" viewBox="503 148 780 561"><g stroke="#000" stroke-opacity=".055" stroke-width="1" fill="none" shape-rendering="crispEdges"><path d="M515.5 149V709M525.5 149V709M534.5 149V709M544.5 149V709M553.5 149V709M563.5 149V709M573.5 149V709M582.5 149V709M592.5 149V709M601.5 149V709M611.5 149V709M621.5 149V709M630.5 149V709M640.5 149V709M649.5 149V709M659.5 149V709M669.5 149V709M678.5 149V709M688.5 149V709M697.5 149V709M707.5 149V709M717.5 149V709M726.5 149V709M736.5 149V709M745.5 149V709M755.5 149V709M765.5 149V709M774.5 149V709M784.5 149V709M793.5 149V709M803.5 149V709M813.5 149V709M822.5 149V709M832.5 149V709M841.5 149V709M851.5 149V709M861.5 149V709M870.5 149V709M880.5 149V709M889.5 149V709M899.5 149V709M909.5 149V709M918.5 149V709M928.5 149V709M937.5 149V709M947.5 149V709M957.5 149V709M966.5 149V709M976.5 149V709M985.5 149V709M995.5 149V709M1005.5 149V709M1014.5 149V709M1024.5 149V709M1033.5 149V709M1043.5 149V709M1053.5 149V709M1062.5 149V709M1072.5 149V709M1081.5 149V709M1091.5 149V709M1101.5 149V709M1110.5 149V709M1120.5 149V709M1129.5 149V709M1139.5 149V709M1149.5 149V709M1158.5 149V709M1168.5 149V709M1177.5 149V709M1187.5 149V709M1197.5 149V709M1206.5 149V709M1216.5 149V709M1225.5 149V709M1235.5 149V709M1245.5 149V709M1254.5 149V709M1264.5 149V709M1273.5 149V709"/><path d="M505 150.5H1281M505 160.5H1281M505 170.5H1281M505 179.5H1281M505 189.5H1281M505 198.5H1281M505 208.5H1281M505 218.5H1281M505 227.5H1281M505 237.5H1281M505 246.5H1281M505 256.5H1281M505 266.5H1281M505 275.5H1281M505 285.5H1281M505 294.5H1281M505 304.5H1281M505 314.5H1281M505 323.5H1281M505 333.5H1281M505 342.5H1281M505 352.5H1281M505 362.5H1281M505 371.5H1281M505 381.5H1281M505 390.5H1281M505 400.5H1281M505 410.5H1281M505 419.5H1281M505 429.5H1281M505 438.5H1281M505 448.5H1281M505 458.5H1281M505 467.5H1281M505 477.5H1281M505 486.5H1281M505 496.5H1281M505 506.5H1281M505 515.5H1281M505 525.5H1281M505 534.5H1281M505 544.5H1281M505 554.5H1281M505 563.5H1281M505 573.5H1281M505 582.5H1281M505 592.5H1281M505 602.5H1281M505 611.5H1281M505 621.5H1281M505 630.5H1281M505 640.5H1281M505 650.5H1281M505 659.5H1281M505 669.5H1281M505 678.5H1281M505 688.5H1281M505 698.5H1281M505 707.5H1281"/></g><path d="M505.500 148V709M1281.500 148V709" stroke="#eeaab0" stroke-dasharray="4 2" stroke-width="1" shape-rendering="crispEdges"/></svg>
<div style="left:1335px;top:134px;width:17px;height:575px;background:#f0f0f0"></div>
<div style="left:1336px;top:151px;width:15px;height:18px;background:#cdcdcd"></div>
<div style="left:453px;top:709px;width:899px;height:17px;background:#f0f0f0"></div>
<div style="left:470px;top:710px;width:831px;height:15px;background:#cdcdcd"></div>
<div style="left:880px;top:713px;width:10px;height:9px;background:#f0f0f0"></div>
<svg class="a" style="left:1335px;top:134px" width="17" height="575" viewBox="0 0 17 575" fill="none" stroke="#565656" stroke-width="1.9"><path d="M5.200 10.800L8.500 7.500L11.800 10.800"/><path d="M5.200 565.200L8.500 568.500L11.800 565.200"/></svg>
<svg class="a" style="left:453px;top:709px" width="899" height="17" viewBox="0 0 899 17" fill="none" stroke="#565656" stroke-width="1.9"><path d="M9.800 5.200L6.500 8.500L9.800 11.800"/><path d="M872.200 5.200L875.500 8.500L872.200 11.800"/></svg>
<div style="left:0px;top:739px;width:1366px;height:27px;background:#f0f0f0"></div>
<div style="left:0px;top:766px;width:1366px;height:2px;background:#1e1e1e"></div>
<div style="left:393px;top:766px;width:48px;height:2px;background:#525252"></div>
<div style="left:2px;top:743px;width:5px;height:23px;border-top:1px solid #a0a0a0;border-left:1px solid #a0a0a0;border-right:1px solid #fff;border-bottom:1px solid #fff;box-sizing:border-box"></div>
<div style="left:820px;top:743px;width:66px;height:23px;border-top:1px solid #a0a0a0;border-left:1px solid #a0a0a0;border-right:1px solid #fff;border-bottom:1px solid #fff;box-sizing:border-box"></div>
<div style="left:893px;top:743px;width:103px;height:23px;border-top:1px solid #a0a0a0;border-left:1px solid #a0a0a0;border-right:1px solid #fff;border-bottom:1px solid #fff;box-sizing:border-box"></div>
<div style="left:1002px;top:743px;width:193px;height:23px;border-top:1px solid #a0a0a0;border-left:1px solid #a0a0a0;border-right:1px solid #fff;border-bottom:1px solid #fff;box-sizing:border-box"></div>
<div style="left:1202px;top:743px;width:162px;height:23px;border-top:1px solid #a0a0a0;border-left:1px solid #a0a0a0;border-right:1px solid #fff;border-bottom:1px solid #fff;box-sizing:border-box"></div>
<div style="left:816px;top:742px;width:1px;height:24px;background:#dedede"></div>
<div style="left:888px;top:742px;width:1px;height:24px;background:#dedede"></div>
<div style="left:997px;top:742px;width:1px;height:24px;background:#dedede"></div>
<div style="left:1197px;top:742px;width:1px;height:24px;background:#dedede"></div>
<span class="t" style="top:748.84px;font-size:12px;line-height:12px;color:#000;left:857.50px;letter-spacing:-0.167px;">none</span>
<span class="t" style="top:748.84px;font-size:12px;line-height:12px;color:#000;left:922.00px;letter-spacing:-0.182px;">1625 mm roll</span>
<span class="t" style="top:748.84px;font-size:12px;line-height:12px;color:#000;left:1028.00px;transform-origin:0 0;transform:scaleX(0.9103);">MUTOH_VALUEJET_1604W: Idle</span>
<span class="t" style="top:748.84px;font-size:12px;line-height:12px;color:#000;left:1249.00px;letter-spacing:-0.055px;">Status not supported.</span>
<svg class="a" style="left:816px;top:744px" width="440" height="21" viewBox="816 744 440 21">
<circle cx="828" cy="750.900" r="3.100" fill="#134d66"/>
<circle cx="835.200" cy="753.200" r="3.100" fill="#5f8591"/>
<circle cx="829" cy="758.200" r="3.100" fill="#066d8c"/>
<!-- roll -->
<path d="M896 755.600L905.500 747.200Q908.500 746.600 910.200 748.800Q911.200 750.600 910.400 752.400L902 762H896z" fill="#0a6a8a"/>
<path d="M897.600 754.300L905.500 747.200Q907.200 746.800 908.400 747.400L899.800 755z" fill="#5fa2be"/>
<path d="M903 762L909.300 755Q911.900 756 911.900 758.500V762z" fill="#3f8aa8"/>
<path d="M903.400 762L908.600 756.200" stroke="#0a6a8a" stroke-width="1.600" fill="none"/>
<path d="M899.800 755.300Q901.900 756.800 902.600 761.400" stroke="#d6e9f0" stroke-width=".8" fill="none"/>
<!-- chevrons -->
<path d="M1013.600 747.200H1017.300L1020.200 751.300L1016.500 755.600H1013L1016.200 751.400z" fill="#066d8c"/>
<path d="M1013.400 751.400H1010L1007 756L1010.300 760.600H1013.800L1010.600 756z" fill="#066d8c"/>
<!-- plotter -->
<path d="M1205.300 749.200Q1205.300 747.300 1207.300 747.200L1219.500 748.300Q1221.100 748.800 1221.100 750.400V752Q1221 753 1219.800 752.900L1207 751.600Q1205.300 751.200 1205.300 749.200z" fill="#0b6d8c"/>
<path d="M1207.600 751.500H1209.400V757.300L1211 756.400L1211.300 758L1206.300 760L1206 758.600L1207.600 758z" fill="#0b6d8c"/>
<path d="M1217.500 752.700H1219.500V759L1221 758.400L1221.300 760L1216.300 762L1216 760.500L1217.500 760z" fill="#0b6d8c"/>
<path d="M1210 753.300L1216 753.700" stroke="#9cc7d6" stroke-width=".7"/>
<!-- info -->
<defs><radialGradient id="ig" cx=".5" cy=".35" r=".7"><stop offset="0" stop-color="#eaf7ff"/><stop offset=".55" stop-color="#9fd2f5"/><stop offset="1" stop-color="#2f86d8"/></radialGradient></defs>
<path d="M1231.800 757.500L1233 760.600L1236.600 757.600z" fill="#6eb6ee" stroke="#5a6a78" stroke-width=".4"/>
<ellipse cx="1235.100" cy="752" rx="7.200" ry="5.900" fill="url(#ig)" stroke="#5a6a78" stroke-width=".5"/>
<text x="1235.200" y="756.500" font-family="'Liberation Serif',serif" font-weight="bold" font-size="12.500" text-anchor="middle" fill="#000">i</text>
</svg>
</div></body></html>
